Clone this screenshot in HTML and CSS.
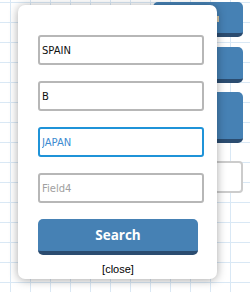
FILE: index.html
```html
<!DOCTYPE html>
<html>
<head>
<meta charset="utf-8">
<link rel="stylesheet" href="styles.css">
</head>
<body>
<div class="page">
  <div class="side">
    <div class="btn b1"><span class="mark"></span></div>
    <div class="btn b2"></div>
    <div class="btn b3"></div>
    <div class="box"></div>
  </div>
</div>
<div class="modal">
  <div class="fields">
    <input class="field" type="text" value="SPAIN">
    <input class="field" type="text" value="B">
    <input class="field focus" type="text" value="JAPAN">
    <input class="field" type="text" placeholder="Field4">
  </div>
  <button class="search">Search</button>
  <div class="close">[close]</div>
</div>
</body>
</html>
```
FILE: styles.css
```css
html, body {
  margin: 0;
  padding: 0;
}
body {
  width: 250px;
  height: 292px;
  overflow: hidden;
  background-color: #ffffff;
  background-image:
    linear-gradient(to right, #d9e8f5 1px, transparent 1px),
    linear-gradient(to bottom, #d9e8f5 1px, transparent 1px);
  background-size: 20px 20px;
  background-position: 10px 2px;
  position: relative;
  font-family: "DejaVu Sans", sans-serif;
}
.page {
  display: flex;
  justify-content: flex-end;
  padding: 2px 7px 0 0;
}
.side {
  width: 90px;
  display: flex;
  flex-direction: column;
}
.btn {
  background: #4681b4;
  border-bottom: 4px solid #2b4c70;
  border-radius: 5px;
  box-sizing: border-box;
  position: relative;
}
.b1 { height: 35px; }
.b2 { height: 36px; margin-top: 10px; }
.b3 { height: 51px; margin-top: 9px; }
.box {
  height: 32px;
  margin-top: 18px;
  margin-left: 7px;
  border: 2px solid #cccccc;
  border-radius: 4px;
  box-sizing: border-box;
  background: #ffffff;
}
.mark {
  position: absolute;
  left: 63px;
  top: 14px;
  width: 3px;
  height: 6px;
  background: #d9c9a9;
}
.modal {
  position: absolute;
  left: 18px;
  top: 5px;
  width: 199px;
  height: 274px;
  box-sizing: border-box;
  padding: 30px 19px 0 20px;
  background: #ffffff;
  border-radius: 7px;
  box-shadow: 0 1px 10px rgba(0, 0, 0, 0.35);
  display: flex;
  flex-direction: column;
}
.fields {
  display: flex;
  flex-direction: column;
  gap: 16px;
}
.field {
  width: 166px;
  height: 30px;
  box-sizing: border-box;
  margin: 0;
  border: 2px solid #b7b7b7;
  border-radius: 3px;
  padding: 0 2px;
  font-family: "DejaVu Sans", sans-serif;
  font-size: 10px;
  color: #111111;
  background: #ffffff;
  outline: none;
}
.field::placeholder {
  color: #a0a0a0;
}
.field.focus {
  border-color: #1f93d8;
  color: #3d8bd0;
}
.search {
  margin: 16px 0 0 0;
  width: 160px;
  height: 36px;
  box-sizing: border-box;
  border: none;
  border-bottom: 4px solid #2b4c70;
  border-radius: 5px;
  background: #4681b4;
  color: #ffffff;
  font-family: "Open Sans", sans-serif;
  font-weight: 700;
  font-size: 13.5px;
  padding: 0;
  line-height: 32px;
}
.close {
  margin-top: 7px;
  text-align: center;
  font-family: "Liberation Sans", Arial, sans-serif;
  font-size: 11px;
  line-height: 14px;
  color: #000000;
}
```
